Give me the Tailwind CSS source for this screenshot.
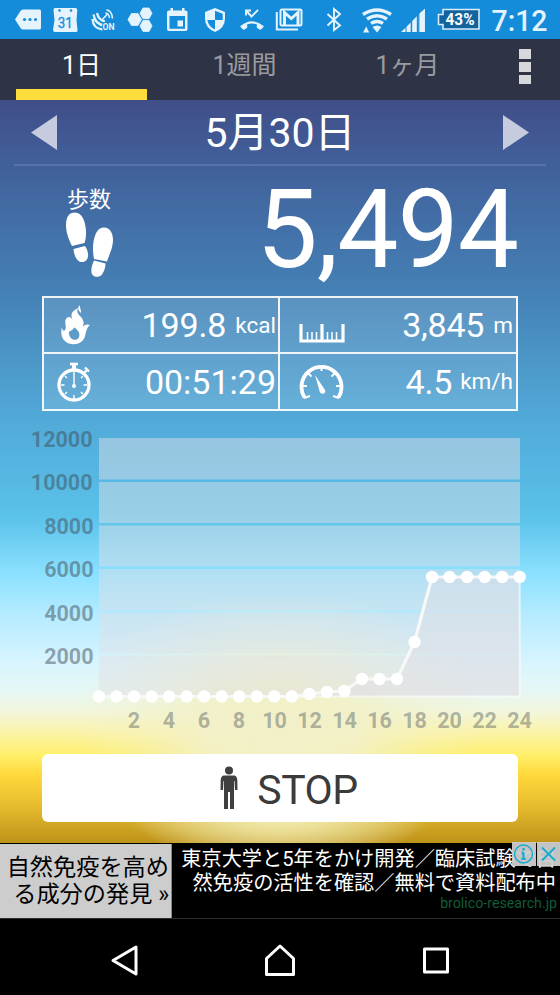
<!DOCTYPE html>
<html lang="ja">
<head>
    <meta charset="UTF-8">
    <meta name="viewport" content="width=device-width, initial-scale=1.0">
    <title>歩数計</title>
    <script src="https://cdn.jsdelivr.net/npm/@tailwindcss/browser@4"></script>
</head>
<body class="bg-black font-['Roboto','Noto_Sans_CJK_JP',sans-serif]">
<div class="w-[560px] h-[995px] flex flex-col overflow-hidden">

    <!-- ステータスバー -->
    <header class="h-[39px] shrink-0 bg-[#148cd9]">
        <svg class="block" width="560" height="39" viewBox="0 0 560 39" fill="#e4f3fc">
            <path d="M15 19.500L20.500 11Q21.500 9.500 23 9.500H39.500Q41 9.500 41 11V28Q41 29.500 39.500 29.500H23Q21.500 29.500 20.500 28Z"/>
            <g fill="#148cd9"><circle cx="24.500" cy="19.500" r="1.600"/><circle cx="30" cy="19.500" r="1.600"/><circle cx="35.500" cy="19.500" r="1.600"/></g>
            <path d="M55 8Q53.500 8 53.500 10L54.500 20L53 30Q53 32 55 32H76Q78 32 77.500 30L76.500 20L77.300 10Q77 8 75.500 8Z"/>
            <g fill="#148cd9"><circle cx="59.500" cy="10.500" r="1.300"/><circle cx="71" cy="10.500" r="1.300"/></g>
            <text x="65.300" y="27.500" font-size="15.500" text-anchor="middle" fill="#148cd9" stroke="#148cd9" stroke-width=".3" textLength="15" lengthAdjust="spacingAndGlyphs">31</text>
            <g fill="none" stroke="#e4f3fc">
                <path stroke-width="2.300" d="M92.500 19Q93 28.500 102.500 29.500M93.500 14.500Q95 24.500 104.500 25.500M97 13Q98.500 20 105 21.500"/>
                <path stroke-width="1.500" d="M102 20L107 14.500M106.500 9.800Q112 11 112.500 18.500M105.500 13Q109 13.500 109.500 18"/>
            </g>
            <text x="102.500" y="30" font-size="8.500" font-weight="700" textLength="12" lengthAdjust="spacingAndGlyphs" stroke="#148cd9" stroke-width="2" paint-order="stroke">ON</text>
            <path d="M131.500 13.500H138L141.500 19.500L138 25.500H131.500L128 19.500ZM143 8H149L152 13.300L149 18.700H143L140 13.300ZM143 20.500H149L152 26L149 31.500H143L140 26Z" stroke="#e4f3fc" stroke-linejoin="round" stroke-width=".8"/>
            <path fill-rule="evenodd" d="M170.500 8H173V10.500H182V8H184.500V10.500H185.500Q187.500 10.500 187.500 12.500V29Q187.500 31 185.500 31H169Q167 31 167 29V12.500Q167 10.500 169 10.500H170.500ZM169.500 16V28.700H185V16ZM177.500 20.500H183V26.500H177.500Z"/>
            <path fill-rule="evenodd" d="M215 8L225 12V18.500Q225 28 215 32Q205 28 205 18.500V12ZM215 10.700V20H207.300Q208.500 26.500 215 29.500V20H222.700V13.700Z"/>
            <path d="M240.500 26Q252 16.500 263.500 26Q264 26.500 263.500 27L261 29.500Q260.500 30 259.500 29.400L256.800 27.800V24.300Q252 22.800 247.200 24.300V27.800L244.500 29.400Q243.500 30 243 29.500L240.500 27Q240 26.500 240.500 26Z"/>
            <path d="M246 15.500V10.500H251M246.500 11L251.500 16.500L258 10" fill="none" stroke="#e4f3fc" stroke-width="1.900"/>
            <path fill="none" stroke="#e4f3fc" stroke-width="2" d="M276.800 12V29.500H298"/>
            <rect x="280.500" y="9.500" width="21" height="16" rx="1.500" fill="none" stroke="#e4f3fc" stroke-width="2"/>
            <path d="M284.500 25V12.500L291.300 18.500L298 12.500V25" fill="none" stroke="#e4f3fc" stroke-width="3"/>
            <path fill="none" stroke="#e4f3fc" stroke-width="1.900" d="M327.500 14L340 25.500L334 30V9L340 14L327.500 25.500"/>
            <!-- wifi -->
            <g fill="none" stroke="#e4f3fc" stroke-width="3.400">
                <path d="M363 14.500Q377 5.500 391 14.500M367 19Q377 12.500 387 19M371 23.400Q377 19.400 383 23.400"/>
            </g>
            <path d="M377 32.500L372.500 27Q377 24 381.500 27ZM363 32.500L366.200 26.500L369.200 32.500Z"/>
            <!-- 電波強度 -->
            <path d="M401 32L405.500 27.800V32ZM406.500 26.800L410.700 22.500V32H406.500ZM412.200 21L416.800 16.300V32H412.200ZM418.300 14.800L422.400 11V32H418.300ZM423.800 9.700L424.800 8.700V32H423.800Z"/>
            <path d="M419.500 13.500L424.800 8.700V32H419.500Z"/>
            <path d="M418.800 10V32" stroke="#148cd9" stroke-width="1.200"/>
            <path d="M443 9.500H479V29H443V24.500H438.500V14.500H443Z" fill="#12649d" stroke="#d8ecf9" stroke-width="1.600"/>
            <text x="445.500" y="25" font-size="16" font-weight="700" fill="#fff" textLength="29" lengthAdjust="spacingAndGlyphs">43%</text>
            <text x="491.500" y="31" font-size="29" font-weight="500" textLength="56" lengthAdjust="spacingAndGlyphs">7:12</text>
        </svg>
    </header>

    <!-- 期間タブ -->
    <nav class="h-[61px] shrink-0 bg-[#2f3346] flex pl-4 text-[25px] text-[#9a9b9e]">
        <div class="w-[131px] h-full flex flex-col">
            <div class="h-[50px] pt-[2px] flex items-center justify-center text-white leading-none">1日</div>
            <div class="h-[11px] bg-[#ffdd3c]"></div>
        </div>
        <div class="w-[195px] h-[52px] flex items-center justify-center leading-none">1週間</div>
        <div class="w-[131px] h-[52px] flex items-center justify-center leading-none">1ヶ月</div>
        <div class="ml-[46px] pt-[10px] flex flex-col gap-[3px]">
            <div class="w-3 h-[10px] bg-[#d7d8dc]"></div>
            <div class="w-3 h-[10px] bg-[#d7d8dc]"></div>
            <div class="w-3 h-[9px] bg-[#d7d8dc]"></div>
        </div>
    </nav>

    <!-- 本体 -->
    <main class="h-[743px] shrink-0 flex flex-col bg-[radial-gradient(ellipse_150px_48px_at_280px_715px,#f3edb0_0%,#f3edb0a0_40%,#f3edb000_100%),radial-gradient(ellipse_210px_140px_at_280px_630px,#f2f0c8_0%,#f2f0c8f0_35%,#f2f0c860_68%,#f2f0c800_100%),linear-gradient(#404e88_0px,#41609b_65px,#4480b5_190px,#52abd9_325px,#5ac1e9_415px,#8ce1ff_475px,#b5ebff_515px,#d6f4ff_560px,#e5f7f5_590px,#f2f6dc_612px,#fcf3a2_635px,#ffef6a_655px,#ffd83b_675px,#e6bd2e_705px,#bd9219_743px)]">
        <div class="mx-[14px] h-[66px] shrink-0 border-b-2 border-white/12 flex items-center justify-between px-[17px]">
            <svg width="26" height="35" viewBox="0 0 26 35"><path d="M26 0V35L0 17.500Z" fill="#c7cbde"/></svg>
            <div class="text-[41px] leading-none text-white whitespace-nowrap pt-[2px]">5月30日</div>
            <svg width="26" height="35" viewBox="0 0 26 35"><path d="M0 0V35L26 17.500Z" fill="#c7cbde"/></svg>
        </div>

        <div class="h-[130px] shrink-0 flex justify-between pl-[65px] pr-[42px] text-white">
            <div class="pt-[23px] w-12">
                <div class="text-[22px] leading-[22px] pl-[2px] whitespace-nowrap">歩数</div>
                <svg class="mt-px" width="50" height="68" viewBox="0 0 50 68" fill="#fff">
                    <path d="M10 .5C17 .5 20.500 9 21 19C21.200 25 20.500 28 19.500 31L7 34C4 28 1 21 1 13C1 5 4 .5 10 .5ZM8.500 37L20 34C22 37 23.500 41 23 44.500C22 51 15 51.500 12 47.500C9.500 44 9 41 8.500 37Z"/>
                    <path d="M39 15.500C45.500 15.500 48.300 22 48 29C47.500 37 44 43 42 49.500L29 47C28 41 27.500 36 28.500 30C30 21 33 15.500 39 15.500ZM29 48.500L40.500 51.500C40.500 55 39.500 59 37 62.500C34 66 28.500 65.500 26.700 61.500C25.500 57 27.500 52 29 48.500Z"/>
                </svg>
            </div>
            <div class="text-[109px] leading-[128px] tracking-[-1px]">5,494</div>
        </div>

        <!-- 消費カロリー・距離・時間・速度 -->
        <div class="mx-[42px] w-[476px] h-[115px] shrink-0 border-2 border-white/90 bg-white/12 grid grid-cols-[236px_236px] grid-rows-[56px_55px] text-white">
            <div class="border-r-2 border-b-2 border-white/90 flex items-center pl-[17px] pr-[2px]">
                <svg width="30" height="40" viewBox="0 0 30 40"><path fill="#fff" fill-rule="evenodd" d="M17 3C11 6 9 9 11.500 15C10 11 6 11 4.500 15C3.500 19 6 22 4 25C3 27 1 25 1 22C-1 29 1 36 8 38.500C15 41 23 37 24 31C25 27 26 22 29 20C26 18.500 23 20 21.500 22C24 17 22 14 19 11C16 8 16 6 17 3ZM8 29C7 25 11 27 13 22.500C17 24.500 20 29 17.500 33C15 36.500 9 35 8 29ZM19 0C16 3 17 5 20 8C20.500 5 18.500 3 19 0Z"/></svg>
                <div class="ml-auto text-[34px] leading-none tracking-[-0.1px]">199.8</div>
                <div class="ml-[9px] text-[22.500px] leading-none pt-px">kcal</div>
            </div>
            <div class="border-b-2 border-white/90 flex items-center pl-[19px] pr-[3px]">
                <svg class="mt-[18px]" width="46" height="20" viewBox="0 0 46 20"><path fill="none" stroke="#fff" stroke-width="3.200" d="M2 0V17H44V0M23 0V17"/><path stroke="#fff" stroke-width="1.500" d="M8.500 8V17M13 8V17M17.500 8V17M28.500 8V17M33 8V17M37.500 8V17"/></svg>
                <div class="ml-auto text-[34px] leading-none tracking-[-0.2px]">3,845</div>
                <div class="ml-[9px] text-[22.500px] leading-none pt-px">m</div>
            </div>
            <div class="border-r-2 border-white/90 flex items-center pl-[13px] pr-[2px]">
                <svg width="34" height="40" viewBox="0 0 34 40" fill="none" stroke="#fff">
                    <circle cx="17" cy="23" r="15" stroke-width="3.300"/>
                    <path stroke-width="2.600" d="M13 2H21"/><path stroke-width="4" d="M17 2V7"/><path stroke-width="2.400" d="M27 11L30.500 7.500M28 5.500L32 9.500"/>
                    <path stroke-width="1.400" d="M17 10V24M17 33V37M4 23H7.500M26.500 23H30M8 14L10 16M26 14L24 16M8 32L10 30M26 32L24 30"/>
                    <circle cx="17" cy="24" r="2" fill="#fff" stroke="none"/>
                </svg>
                <div class="ml-auto text-[34px] leading-none">00:51:29</div>
            </div>
            <div class="flex items-center pl-[19px] pr-[3px]">
                <svg width="46" height="38" viewBox="0 0 46 38" fill="none" stroke="#fff">
                    <path stroke-width="3.800" d="M5.500 34.500A20 20 0 1 1 39.500 34.500"/>
                    <path stroke-width="2" d="M22.500 2V8M2 23H8M43 23H37M9 10L12.500 13.500M36 10L32.500 13.500M5 35L11 33M40 35L34 33"/>
                    <path fill="#fff" stroke="none" d="M16 12L26 27C27.500 31 22.500 32 20.800 29Z"/>
                </svg>
                <div class="ml-auto text-[34px] leading-none tracking-[-0.2px]">4.5</div>
                <div class="ml-[8px] text-[22.500px] leading-none">km/h</div>
            </div>
        </div>

        <!-- 時間ごとの累計グラフ (17.5px = 1時間, 43.4px = 2000歩) -->
        <svg class="block shrink-0" width="560" height="343" viewBox="0 411 560 343">
            <g fill="#dfdfe5" fill-opacity=".47">
                <path d="M99 438H520V479.500H99ZM99 482H520V523H99ZM99 525.500H520V566.500H99ZM99 569H520V610.300H99ZM99 612.500H520V653.500H99ZM99 655.500H520V696.500H99Z"/>
            </g>
            <path fill="#dfdfe5" fill-opacity=".5" d="M99 696.500H292L309 694L327 692L344 691L362 679H397L414.500 642L432 577H520V696.500Z"/>
            <path fill="none" stroke="#fff" stroke-opacity=".6" stroke-width="2" d="M292 696.500H519.700V577"/>
            <polyline fill="none" stroke="#f8f8f8" stroke-width="3.200" points="99,696.500 292,696.500 309,694 327,692 344,691 362,679 397,679 414.500,642 432,577 520,577"/>
            <g id="dots" fill="#fff"></g>
            <g font-size="21.500" font-weight="700" fill="#3c4650" fill-opacity=".47" text-anchor="end">
                <text x="92.500" y="447">12000</text>
                <text x="92.500" y="490">10000</text>
                <text x="93.500" y="533.500">8000</text>
                <text x="93.500" y="577">6000</text>
                <text x="93.500" y="620.500">4000</text>
                <text x="93.500" y="663.500">2000</text>
            </g>
            <g font-size="21.500" font-weight="700" fill="#3c4650" fill-opacity=".4" text-anchor="middle">
                <text x="134" y="728">2</text><text x="169" y="728">4</text><text x="204" y="728">6</text><text x="239" y="728">8</text>
                <text x="274.500" y="728">10</text><text x="309.500" y="728">12</text><text x="344.500" y="728">14</text><text x="379.500" y="728">16</text>
                <text x="414.500" y="728">18</text><text x="449.500" y="728">20</text><text x="484.500" y="728">22</text><text x="519.500" y="728">24</text>
            </g>
        </svg>

        <button class="mx-[42px] h-[68px] shrink-0 rounded-md bg-white flex items-center justify-center pl-[18px] text-[#3b3b3b]">
            <svg width="18" height="44" viewBox="0 0 18 44" fill="#404040">
                <circle cx="9" cy="4.500" r="4"/>
                <path d="M3.500 9.500H14.500Q17 10 17.300 14L17.500 24H15L14.500 15H14V43H10V26H8V43H4V15H3.500L3 24H.5L.7 14Q1 10 3.500 9.500Z"/>
            </svg>
            <span class="ml-[19px] text-[41px] leading-none tracking-[-0.5px] pt-[4px]">STOP</span>
        </button>
    </main>

    <!-- 広告 -->
    <section class="relative h-[76px] shrink-0 pt-px flex bg-black border-b border-[#2c2c2c]">
        <div class="w-[172px] h-[74px] bg-[#cdcdcd] border-r border-[#888] pt-[10px] pr-[2px] text-right text-[23.200px] leading-[27px] text-black whitespace-nowrap">
            自然免疫を高め<br>る成分の発見 »
        </div>
        <div class="flex-1 pr-[3px] text-right text-white whitespace-nowrap">
            <div class="pt-[3px] pr-px text-[20.200px] leading-[24px]">東京大学と5年をかけ開発／臨床試験で自<br>然免疫の活性を確認／無料で資料配布中</div>
            <div class="text-[14.200px] leading-[17px] text-[#105c38]">brolico-research.jp</div>
        </div>
        <div class="absolute right-0 -top-px flex gap-px">
            <svg class="bg-[#cdcdcd]/95" width="24" height="24" viewBox="0 0 24 24" fill="none" stroke="#12acd0">
                <circle cx="11.500" cy="12" r="9" stroke-width="1.400"/><path stroke-width="2.200" d="M11.500 10.500V17M11.500 6V8.500M9.500 10.800H11.500M9.500 17H13.700"/>
            </svg>
            <svg class="bg-[#cdcdcd]/95" width="23" height="24" viewBox="0 0 23 24"><path stroke="#12acd0" stroke-width="1.900" d="M5 5.500L18 18.500M18 5.500L5 18.500"/></svg>
        </div>
    </section>

    <!-- ナビゲーションバー -->
    <footer class="h-[76px] shrink-0 bg-black flex items-center justify-between px-[110px] pt-[7px]">
        <svg width="30" height="34" viewBox="0 0 30 34"><path d="M26 3V30L3 16.500Z" fill="none" stroke="#fff" stroke-width="3" stroke-linejoin="round"/></svg>
        <svg width="32" height="34" viewBox="0 0 32 34"><path d="M2.500 14.500L16 2L29.500 14.500V30.500H2.500Z" fill="none" stroke="#fff" stroke-width="3" stroke-linejoin="round"/></svg>
        <svg width="30" height="34" viewBox="0 0 30 34"><rect x="4.500" y="5" width="23" height="23" fill="none" stroke="#fff" stroke-width="3" stroke-linejoin="round"/></svg>
    </footer>
</div>

<script>
    // 0時〜24時の点
    const ys = [696.5, 696.5, 696.5, 696.5, 696.5, 696.5, 696.5, 696.5, 696.5, 696.5, 696.5, 696.5,
        694, 692, 691, 679, 679, 679, 642, 577, 577, 577, 577, 577, 577];
    document.getElementById('dots').innerHTML = ys.map((y, i) => `<circle cx="${99 + i * 17.53}" cy="${y}" r="6.2"/>`).join('');
</script>
</body>
</html>
